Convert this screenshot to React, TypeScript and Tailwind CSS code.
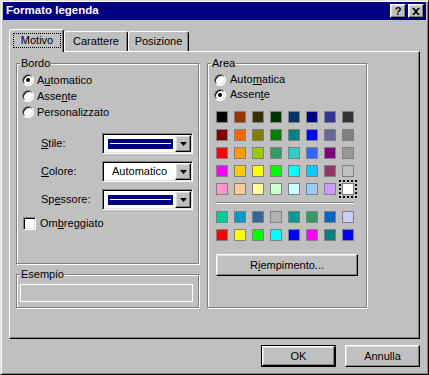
import React from "react";

const raised =
  "border border-t-white border-l-white border-r-black border-b-black shadow-[inset_-1px_-1px_0_#808080,inset_1px_1px_0_#dfdfdf]";
const sunken =
  "border border-t-[#808080] border-l-[#808080] border-r-white border-b-white shadow-[inset_1px_1px_0_#000,inset_-1px_-1px_0_#dfdfdf]";
const etched = "border border-[#808080] shadow-[inset_1px_1px_0_#fff,1px_1px_0_#fff]";

const palette = [
  ["#000000", "#993300", "#333300", "#003300", "#003366", "#000080", "#333399", "#333333"],
  ["#800000", "#FF6600", "#808000", "#008000", "#008080", "#0000FF", "#666699", "#808080"],
  ["#FF0000", "#FF9900", "#99CC00", "#339966", "#33CCCC", "#3366FF", "#800080", "#969696"],
  ["#FF00FF", "#FFCC00", "#FFFF00", "#00FF00", "#00FFFF", "#00CCFF", "#993366", "#C0C0C0"],
  ["#FF99CC", "#FFCC99", "#FFFF99", "#CCFFCC", "#CCFFFF", "#99CCFF", "#CC99FF", "#FFFFFF"],
];
const chartColors = [
  ["#00CC99", "#0099CC", "#336699", "#B2B2B2", "#009999", "#339966", "#0066CC", "#CCCCFF"],
  ["#FF0000", "#FFFF00", "#00FF00", "#00FFFF", "#0000FF", "#FF00FF", "#008080", "#0000FF"],
];

const Radio = ({ checked }: { checked?: boolean }) => (
  <span
    className={`w-[12px] h-[12px] rounded-full bg-white shrink-0 flex items-center justify-center ${sunken}`}
  >
    {checked && <span className="w-[4px] h-[4px] rounded-full bg-black" />}
  </span>
);

const Group = ({
  label,
  className,
  children,
}: {
  label: string;
  className: string;
  children?: React.ReactNode;
}) => (
  <div className={`relative ${etched} ${className}`}>
    <span className="absolute -top-[7px] left-[3px] px-[1px] bg-[#c0c0c0] leading-[13px]">
      {label}
    </span>
    {children}
  </div>
);

const Combo = ({ children }: { children: React.ReactNode }) => (
  <div className={`w-[91px] h-[21px] bg-white flex ${sunken} p-[1px]`}>
    <div className="flex-1 flex items-center">{children}</div>
    <div className={`w-[16px] h-full bg-[#c0c0c0] flex items-center justify-center ${raised}`}>
      <svg width="7" height="4" viewBox="0 0 7 4">
        <path d="M0 0h7L3.5 4z" fill="#000" />
      </svg>
    </div>
  </div>
);

const LineSample = () => (
  <div className="ml-[4px] mr-[2px] flex-1 h-[10px] bg-[#000080] flex items-center px-[2px]">
    <div className="h-px w-full bg-white" />
  </div>
);

const Swatch = ({ color, selected }: { color: string; selected?: boolean }) => (
  <div
    className={`w-[12px] h-[12px] border border-[#808080] ${
      selected ? "outline-2 outline-dotted outline-black outline-offset-[1px]" : ""
    }`}
    style={{ backgroundColor: color }}
  />
);

const Button = ({ children, w }: { children: React.ReactNode; w: string }) => (
  <div className={`${w} h-[22px] bg-[#c0c0c0] flex items-center justify-center ${raised}`}>
    {children}
  </div>
);

export default function App() {
  return (
    <div className="w-[429px] h-[375px] bg-[#c0c0c0] text-[11px] text-black font-['Liberation_Sans',Arial,sans-serif] border border-t-[#dfdfdf] border-l-[#dfdfdf] border-r-black border-b-black shadow-[inset_1px_1px_0_#fff,inset_-1px_-1px_0_#808080] px-[2px] pt-[1px] flex flex-col">
      {/* Title bar */}
      <div className="h-[18px] bg-[#000080] flex items-center pl-[3px] pr-[2px]">
        <span className="flex-1 text-white font-bold text-[11.5px]">Formato legenda</span>
        <div className={`w-[16px] h-[14px] bg-[#c0c0c0] flex items-center justify-center font-bold text-[11px] leading-none ${raised}`}>
          ?
        </div>
        <div className={`ml-[2px] w-[16px] h-[14px] bg-[#c0c0c0] flex items-center justify-center ${raised}`}>
          <svg width="8" height="7" viewBox="0 0 8 7">
            <path d="M0 0h2l2 2 2-2h2L5 3.5 8 7H6L4 5 2 7H0l3-3.5z" fill="#000" />
          </svg>
        </div>
      </div>

      <div className="ml-[6px] mt-[9px] w-[411px]">
        {/* Tabs */}
        <div className="flex items-end h-[22px]">
          <div className="relative z-10 -mb-[1px] w-[55px] h-[23px] bg-[#c0c0c0] border-l border-t border-r border-l-white border-t-white border-r-black rounded-t-[3px] shadow-[inset_-1px_0_0_#808080] px-[3px] pt-[3px]">
            <div className="w-[48px] h-[15px] border border-dotted border-black flex items-center justify-center">
              Motivo
            </div>
          </div>
          <div className="w-[64px] h-[20px] border-l border-t border-r border-l-white border-t-white border-r-black rounded-t-[3px] shadow-[inset_-1px_0_0_#808080] flex items-center justify-center">
            Carattere
          </div>
          <div className="w-[61px] h-[20px] border-l border-t border-r border-l-white border-t-white border-r-black rounded-t-[3px] shadow-[inset_-1px_0_0_#808080] flex items-center justify-center">
            Posizione
          </div>
        </div>

        {/* Panel */}
        <div className="w-[411px] h-[288px] border border-t-white border-l-white border-r-black border-b-black shadow-[inset_-1px_-1px_0_#808080] pl-[6px] pt-[11px] flex gap-[8px]">
          <div className="flex flex-col w-[183px]">
            <Group label="Bordo" className="h-[201px] pt-[8px]">
              <div className="flex flex-col pl-[5px]">
                <div className="h-[16px] flex items-center gap-[3px]">
                  <Radio checked />
                  <span>
                    A<u>u</u>tomatico
                  </span>
                </div>
                <div className="h-[16px] flex items-center gap-[3px]">
                  <Radio />
                  <span>
                    Asse<u>n</u>te
                  </span>
                </div>
                <div className="h-[16px] flex items-center gap-[3px]">
                  <Radio />
                  <span>Personalizzato</span>
                </div>
              </div>
              <div className="mt-[13px] pl-[24px] flex flex-col gap-[7px]">
                <div className="flex items-center">
                  <span className="w-[61px]">
                    <u>S</u>tile:
                  </span>
                  <Combo>
                    <LineSample />
                  </Combo>
                </div>
                <div className="flex items-center">
                  <span className="w-[61px]">
                    <u>C</u>olore:
                  </span>
                  <Combo>
                    <span className="pl-[8px]">Automatico</span>
                  </Combo>
                </div>
                <div className="flex items-center">
                  <span className="w-[61px]">
                    Sp<u>e</u>ssore:
                  </span>
                  <Combo>
                    <LineSample />
                  </Combo>
                </div>
              </div>
              <div className="mt-[5px] pl-[6px] flex items-center gap-[4px]">
                <span className={`w-[13px] h-[13px] bg-white ${sunken}`} />
                <span>
                  Om<u>b</u>reggiato
                </span>
              </div>
            </Group>
            <Group label="Esempio" className="mt-[10px] h-[34px] pl-[3px] pt-[9px]">
              <div className="w-[173px] h-[18px] border border-white" />
            </Group>
          </div>

          <Group label="Area" className="w-[160px] h-[245px] pt-[8px]">
            <div className="flex flex-col pl-[6px]">
              <div className="h-[15px] flex items-center gap-[4px]">
                <Radio />
                <span>
                  Auto<u>m</u>atica
                </span>
              </div>
              <div className="h-[15px] flex items-center gap-[4px]">
                <Radio checked />
                <span>
                  Assen<u>t</u>e
                </span>
              </div>
            </div>
            <div className="pl-[8px] mt-[9px] flex flex-col">
              <div className="grid grid-cols-8 gap-[6px] w-[138px]">
                {palette.flatMap((row, r) =>
                  row.map((c, i) => (
                    <Swatch key={`p${r}-${i}`} color={c} selected={r === 4 && i === 7} />
                  ))
                )}
              </div>
              <div className="mt-[7px] w-[138px] border-t border-b border-t-[#808080] border-b-white" />
              <div className="mt-[7px] grid grid-cols-8 gap-[6px] w-[138px]">
                {chartColors.flatMap((row, r) =>
                  row.map((c, i) => <Swatch key={`c${r}-${i}`} color={c} />)
                )}
              </div>
              <div className="mt-[13px]">
                <Button w="w-[142px]">
                  <span>
                    R<u>i</u>empimento...
                  </span>
                </Button>
              </div>
            </div>
          </Group>
        </div>

        {/* Footer buttons */}
        <div className="mt-[6px] flex justify-end gap-[9px]">
          <div className="w-[75px] h-[22px] border border-black">
            <div className={`w-full h-full bg-[#c0c0c0] flex items-center justify-center ${raised}`}>
              OK
            </div>
          </div>
          <Button w="w-[75px]">Annulla</Button>
        </div>
      </div>
    </div>
  );
}
